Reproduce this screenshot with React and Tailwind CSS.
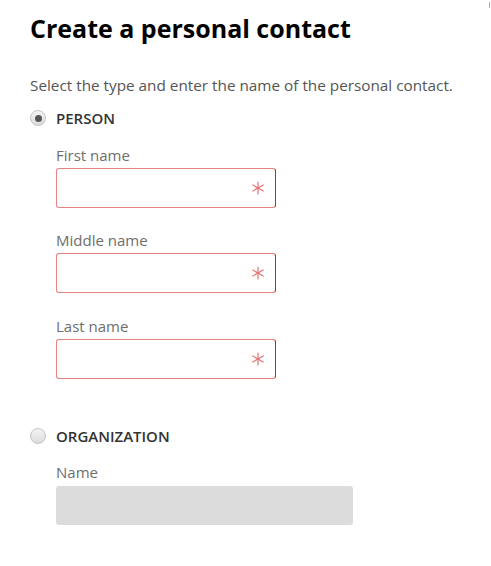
import React from "react";

function Asterisk() {
  return (
    <svg width="14" height="14" viewBox="0 0 14 14" className="absolute right-[10px] top-[12px]">
      <g stroke="#e57373" strokeWidth="1.2" strokeLinecap="round">
        <line x1="7" y1="1" x2="7" y2="13" />
        <line x1="1.8" y1="4" x2="12.2" y2="10" />
        <line x1="1.8" y1="10" x2="12.2" y2="4" />
      </g>
    </svg>
  );
}

function Field({ label, mt }) {
  return (
    <div className={mt}>
      <div className="h-[20px] leading-[20px] text-[15px] text-[#6e6e6e]">{label}</div>
      <div className="relative mt-[3px] h-[40px] w-[220px] rounded-[3px] border border-[#e88383] border-r-[#c81e1e] bg-white">
        <Asterisk />
      </div>
    </div>
  );
}

function Radio({ checked, label }) {
  return (
    <div className="flex h-[20px] items-center">
      <div className="flex h-[16px] w-[16px] items-center justify-center rounded-full border border-[#c4c4c4] bg-gradient-to-b from-[#f4f4f4] to-[#dcdcdc]">
        {checked && <div className="h-[7px] w-[7px] rounded-full bg-[#555555]" />}
      </div>
      <span className="ml-[10px] text-[15px] font-semibold text-[#333333]">{label}</span>
    </div>
  );
}

export default function App() {
  return (
    <div
      className="relative h-[566px] w-[491px] bg-white pl-[30px]"
      style={{ fontFamily: '"Open Sans", "Noto Sans", sans-serif' }}
    >
      <div className="absolute right-[1px] top-[2px] h-[6px] w-[1px] bg-[#b0b0b0]" />
      <div className="pt-[10px]">
        <h1 className="h-[36px] leading-[36px] text-[25px] font-bold text-black">
          Create a personal contact
        </h1>
      </div>
      <div className="mt-[29px] h-[20px] leading-[20px] text-[15.3px] text-[#555555]">
        Select the type and enter the name of the personal contact.
      </div>
      <div className="mt-[13px]">
        <Radio checked label="PERSON" />
      </div>
      <div className="pl-[26px]">
        <Field label="First name" mt="mt-[17px]" />
        <Field label="Middle name" mt="mt-[22px]" />
        <Field label="Last name" mt="mt-[23px]" />
      </div>
      <div className="mt-[47px]">
        <Radio label="ORGANIZATION" />
      </div>
      <div className="pl-[26px] mt-[16px]">
        <div className="h-[20px] leading-[20px] text-[15px] text-[#6e6e6e]">Name</div>
        <div className="mt-[4px] h-[39px] w-[297px] rounded-[3px] bg-[#dcdcdc]" />
      </div>
    </div>
  );
}
